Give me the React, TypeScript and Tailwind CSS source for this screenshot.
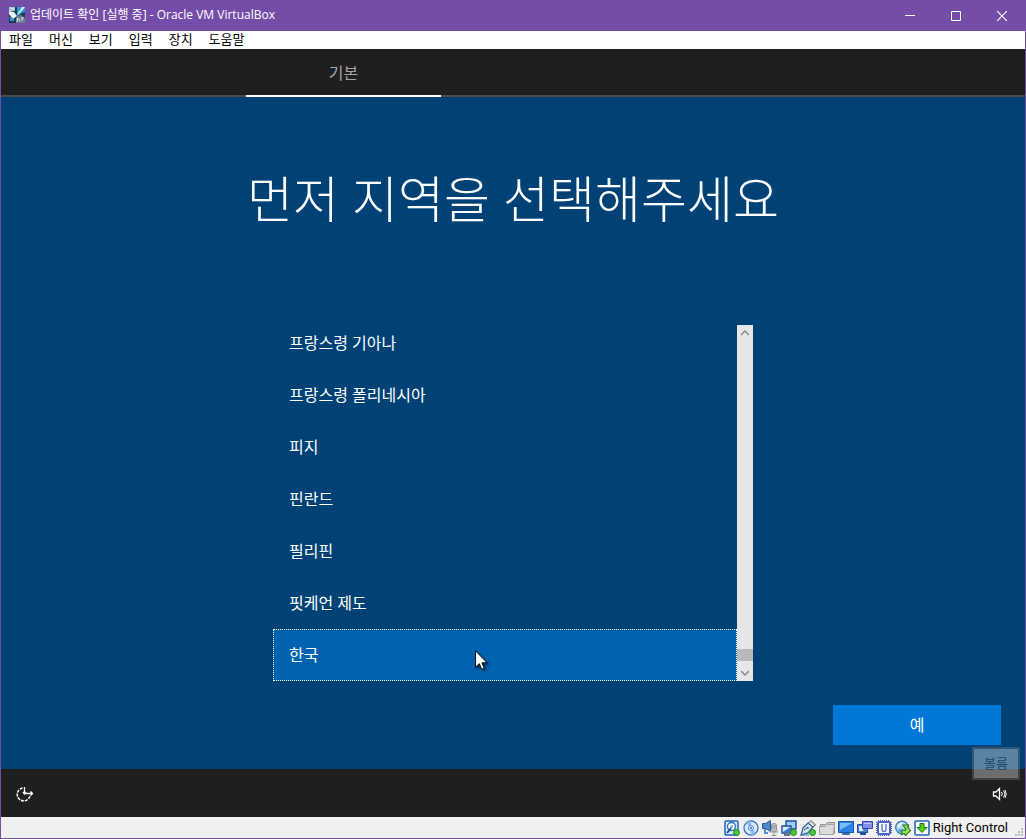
import React, { useState } from 'react';

const regions = ['프랑스령 기아나', '프랑스령 폴리네시아', '피지', '핀란드', '필리핀', '핏케언 제도', '한국'];
const menus = ['파일', '머신', '보기', '입력', '장치', '도움말'];

const AppIcon = () => (
    <svg className="w-4 h-4" viewBox="0 0 16 16">
        <path fill="#25384f" d="M0 0h16v16H0z" />
        <path fill="#a9c9d8" d="M0 0h6v4H0z" />
        <path fill="#e8f7fb" d="M0 4l5 1 3 4-4 3-4-5z" />
        <path fill="#2b9bd8" d="M8 0h8v5l-3 1-5 3zM1 9l4 3v2H1z" />
        <path fill="#d6f2fa" d="M13 0h3l-6 7-2 1z" />
        <path fill="#6d7f8e" d="M7 9l5-1 4 3v5H7z" />
        <path stroke="#dce9ef" fill="none" d="M8 15l1-4 2 3M12 11h3M12 13h2M2 1.5h3" />
    </svg>
);

const GreenDot = () => <circle cx="12.5" cy="12.5" r="3" fill="#52c43c" stroke="#168c18" />;

const HardDiskIcon = () => (
    <svg className="w-4 h-4" viewBox="0 0 16 16">
        <rect x="1" y="1" width="13" height="14" rx="1" fill="#d5ebfb" stroke="#1f66b5" strokeWidth="1.5" />
        <circle cx="7.5" cy="6.5" r="4" fill="#fff" stroke="#2470bc" strokeWidth="1.3" />
        <circle cx="7.5" cy="6.5" r="1.5" fill="#77b6e7" />
        <path d="M3 13l4-5" stroke="#174e88" strokeWidth="2" />
        <GreenDot />
    </svg>
);

const OpticalIcon = () => (
    <svg className="w-4 h-4" viewBox="0 0 16 16">
        <circle cx="8" cy="8" r="7" fill="#d8eaff" stroke="#3976c5" strokeWidth="1.3" />
        <path fill="#8fb9ee" d="M8 8L3 3a7 7 0 0 1 5-2zM8 8l5 5a7 7 0 0 1-5 2z" />
        <circle cx="8" cy="8" r="2.5" fill="#f5faff" stroke="#3f83d8" />
        <circle cx="8" cy="8" r="1" fill="#2364b3" />
    </svg>
);

const AudioIcon = () => (
    <svg className="w-4 h-4" viewBox="0 0 16 16">
        <path fill="#4d86ca" stroke="#225898" d="M.5 3.5h3l5-3v11l-5-3h-3z" />
        <path stroke="#4f91d8" strokeWidth="2" d="M3 9v4h3" fill="none" />
        <rect x="9.5" y="3.5" width="5" height="8" rx="2" fill="#c1c4c7" stroke="#8c8f92" />
        <path stroke="#939699" d="M10 6h4M10 8h4M8 10v2h8v-2M12 12v3M9.5 15.5h5" fill="none" />
    </svg>
);

const NetworkIcon = () => (
    <svg className="w-4 h-4" viewBox="0 0 16 16">
        <path fill="#9ccbf9" stroke="#1f4a94" strokeWidth="1.4" d="M5 1h10v8H5z" />
        <path fill="#d5eaff" stroke="#1f4a94" strokeWidth="1.4" d="M1 6h9v7H1z" />
        <path fill="#3c7cd0" d="M9 7v5H2z" />
        <path stroke="#3b4d65" strokeWidth="1.5" d="M3 15h6" />
        <GreenDot />
    </svg>
);

const UsbIcon = () => (
    <svg className="w-4 h-4" viewBox="0 0 16 16">
        <path fill="#d3e6f7" stroke="#2d6298" strokeWidth="1.3" d="M3 8l5-5 5 4-5 6-4 1-3 1 1-3z" />
        <path fill="#fff" stroke="#35556f" d="M8.5 3L11 .5 15.5 5 13 7z" />
        <path stroke="#30485c" d="M11 2.5l1 1M13 4.5l1 1M4 10l4-3M8 7v2" />
        <path stroke="#3b7bb6" fill="none" d="M1 15h8" />
        <GreenDot />
    </svg>
);

const FolderIcon = () => (
    <svg className="w-4 h-4" viewBox="0 0 16 16">
        <path fill="#c8c8c8" stroke="#929292" d="M1.5 13.5v-9h5l2-2h7v11z" />
        <path fill="#dcdcdc" stroke="#a2a2a2" d="M.5 14.5v-8h6l2-2h7l-1 10z" />
    </svg>
);

const DisplayIcon = () => (
    <svg className="w-4 h-4" viewBox="0 0 16 16">
        <path fill="#2a82e5" stroke="#1c59ae" d="M.5 1.5h15v11H.5z" />
        <path fill="#79bdf9" d="M2 3h12L2 10z" />
        <path fill="#5d9ae0" stroke="#3e6fa8" d="M4.5 13.5h7v1h-7z" />
    </svg>
);

const RecordingIcon = () => (
    <svg className="w-4 h-4" viewBox="0 0 16 16">
        <path fill="#4b85d0" stroke="#245296" d="M.5 4.5h10v8H.5z" />
        <path fill="#d3e9fd" d="M2 6h4v5H2z" />
        <path fill="#828cea" stroke="#3e42a8" d="M5.5 1.5h10v7h-10z" />
        <path fill="#c0c7ff" d="M7 3h7v1H7z" />
        <path stroke="#245296" strokeWidth="2" d="M3 14h6" />
    </svg>
);

const CpuIcon = () => (
    <svg className="w-4 h-4" viewBox="0 0 16 16">
        <rect x="2" y="2" width="12" height="12" rx="1" fill="#f2f5ff" stroke="#4a63c0" strokeWidth="2" />
        <path stroke="#4a63c0" strokeDasharray="1 1" d="M2 .5h12M2 15.5h12M.5 2v12M15.5 2v12" />
        <path fill="none" stroke="#6b80cf" strokeWidth="1.5" d="M6 4v5q0 2.500 2 2.500t2-2.500V4" />
    </svg>
);

const MouseIcon = () => (
    <svg className="w-4 h-4" viewBox="0 0 16 16">
        <circle cx="7" cy="7.5" r="6.3" fill="#acd7f5" stroke="#3979b3" strokeWidth="1.3" />
        <path fill="#e9f6ff" d="M2 6q3-5 6-3L4 8z" />
        <path fill="#4b9be0" d="M3 9l5 1-1 3-3-1z" />
        <path fill="#a4e84f" stroke="#27822d" strokeWidth="1.2" d="M8 5h5.5l-1 2 3 3.500-5 5-1.500-2-2.500 1 .5-4.500 3 .5 1-1z" />
    </svg>
);

const KeyboardIcon = () => (
    <svg className="w-4 h-4" viewBox="0 0 16 16">
        <rect x="1" y="1" width="14" height="14" rx="1" fill="#f6fbff" stroke="#2a65b5" strokeWidth="1.6" />
        <path fill="#52d01c" stroke="#187b11" d="M6 3.5h4v4h3L8 12.5 3 7.5h3z" />
    </svg>
);

const EaseOfAccessIcon = () => (
    <svg className="w-5 h-5" viewBox="0 0 20 20" fill="none" stroke="#fff">
        <path d="M6.5 4A6.500 6.500 0 1 0 14 12" strokeWidth="1.5" strokeDasharray="3 1" />
        <path strokeWidth="1.3" d="M8.5 3v7.500M8.5 9.500h8M7 8l1.500 2 1.500-2M14.500 7.500l2 2-2 2" />
    </svg>
);

const SpeakerIcon = () => (
    <svg className="w-4 h-4" viewBox="0 0 16 16" fill="none" stroke="#fff">
        <path strokeWidth="1.3" d="M1.5 6h2.500l3.500-3.500v11L4 10H1.500z" />
        <path d="M9.5 6q1.500 2 0 4M11.500 4.500q3 3.500 0 7M13 4q2.500 4 0 8" />
    </svg>
);

const Cursor = () => (
    <svg className="absolute left-[202px] top-[21px] w-4 h-6 drop-shadow-[2px_2px_1px_rgba(0,0,0,0.5)] pointer-events-none" viewBox="0 0 16 24">
        <path fill="#fff" stroke="#101018" d="M.5.8v16.500l3.800-3.600 2.400 5.500 2.500-1.100-2.300-5.300h5.200z" />
    </svg>
);

const statusIcons = [HardDiskIcon, OpticalIcon, AudioIcon, NetworkIcon, UsbIcon, FolderIcon, DisplayIcon, RecordingIcon, CpuIcon, MouseIcon, KeyboardIcon];

const TitleBar: React.FC = () => (
    <header className="flex h-[31px] items-center justify-between bg-[#744da9] text-white">
        <h1 className="flex items-center gap-[5px] pl-2 pb-[2px] text-xs">
            <AppIcon />
            업데이트 확인 [실행 중] - Oracle VM VirtualBox
        </h1>
        <div className="flex h-full">
            <button aria-label="최소화" className="flex w-[46px] items-center justify-center">
                <svg className="w-[10px] h-[10px]" viewBox="0 0 10 10" stroke="#fff"><path d="M0 4.5h10" /></svg>
            </button>
            <button aria-label="최대화" className="flex w-[46px] items-center justify-center">
                <svg className="w-[10px] h-[10px]" viewBox="0 0 10 10" stroke="#fff" fill="none"><path d="M.5.5h9v9h-9z" /></svg>
            </button>
            <button aria-label="닫기" className="flex w-[46px] items-center justify-center">
                <svg className="w-[10px] h-[10px]" viewBox="0 0 10 10" stroke="#fff" strokeWidth="1.2"><path d="M0 0l10 10M10 0L0 10" /></svg>
            </button>
        </div>
    </header>
);

const ScrollBar: React.FC = () => (
    <div className="flex w-4 flex-col items-center bg-[#e6e6e6]">
        <button aria-label="위로" className="flex h-4 w-4 items-center justify-center">
            <svg className="w-2 h-2" viewBox="0 0 8 8" fill="none" stroke="#858585" strokeWidth="1.3"><path d="M0 6l4-4 4 4" /></svg>
        </button>
        <div className="flex-1" />
        <div className="h-3 w-full bg-[#b9b9b9]" />
        <div className="h-1" />
        <button aria-label="아래로" className="flex h-4 w-4 items-center justify-center">
            <svg className="w-2 h-2" viewBox="0 0 8 8" fill="none" stroke="#858585" strokeWidth="1.3"><path d="M0 2l4 4 4-4" /></svg>
        </button>
    </div>
);

const App: React.FC = () => {
    const [selected, setSelected] = useState('한국');

    return (
        <div className="flex min-h-screen flex-col border-x border-b border-[#744da9] bg-[#004275] font-['Open_Sans','Noto_Sans_CJK_KR',sans-serif] text-white">
            <TitleBar />
            <nav className="flex h-[18px] items-center gap-4 bg-white pl-2 pb-[2px] text-[13px] text-black">
                {menus.map(menu => (
                    <button key={menu} className="leading-4">{menu}</button>
                ))}
            </nav>
            <div className="flex h-12 border-b-2 border-[#4c4c4c] bg-[#1f1f1f] pl-[245px]">
                <button className="-mb-[2px] w-[195px] border-b-2 border-white pt-[2px] text-base text-[#a6a6a6]">기본</button>
            </div>

            <main className="flex flex-1 flex-col px-6 pb-6">
                <h2 className="pt-[66px] text-center text-[50px] font-light leading-[72px]">먼저 지역을 선택해주세요</h2>
                <div className="mx-auto mt-[90px] flex h-[356px] w-full max-w-[480px]">
                    <ul role="listbox" aria-label="지역" className="flex flex-1 flex-col justify-end overflow-hidden">
                        {regions.map(region => (
                            <li key={region} role="option" aria-selected={region === selected} className="relative shrink-0">
                                <button
                                    onClick={() => setSelected(region)}
                                    className={`h-[52px] w-full px-[15px] text-left text-base border border-dotted ${region === selected ? 'border-white bg-[#0063b1]' : 'border-transparent'}`}
                                >
                                    {region}
                                </button>
                                {region === selected && <Cursor />}
                            </li>
                        ))}
                    </ul>
                    <ScrollBar />
                </div>
                <button className="mt-6 h-10 w-[168px] self-end bg-[#0078d7] text-base">예</button>
            </main>

            <footer>
                <div className="relative flex h-12 items-center justify-between bg-[#1f1f1f] px-[15px] pt-[2px]">
                    <button aria-label="접근성"><EaseOfAccessIcon /></button>
                    <button aria-label="볼륨" aria-describedby="volume-tip" className="mr-[2px]"><SpeakerIcon /></button>
                    <span id="volume-tip" role="tooltip" className="absolute right-[5px] -top-[22px] flex h-[33px] w-12 items-center justify-center border-2 border-[#777]/40 bg-white/35 bg-clip-padding text-[13px] text-[#1f4765]">볼륨</span>
                </div>
                <div className="flex h-[21px] items-center justify-end gap-[3px] bg-[#f0f0f0] text-black">
                    {statusIcons.map((Icon, i) => <Icon key={i} />)}
                    <span className="font-[Roboto,sans-serif] text-[13px]">Right Control</span>
                    <svg className="ml-1 w-[10px] h-[10px] self-end" viewBox="0 0 10 10" fill="#bdbdbd">
                        <path d="M6 0h2v2H6zM3 3h2v2H3zM6 3h2v2H6zM0 6h2v2H0zM3 6h2v2H3zM6 6h2v2H6z" />
                    </svg>
                </div>
            </footer>
        </div>
    );
};

export default App;
